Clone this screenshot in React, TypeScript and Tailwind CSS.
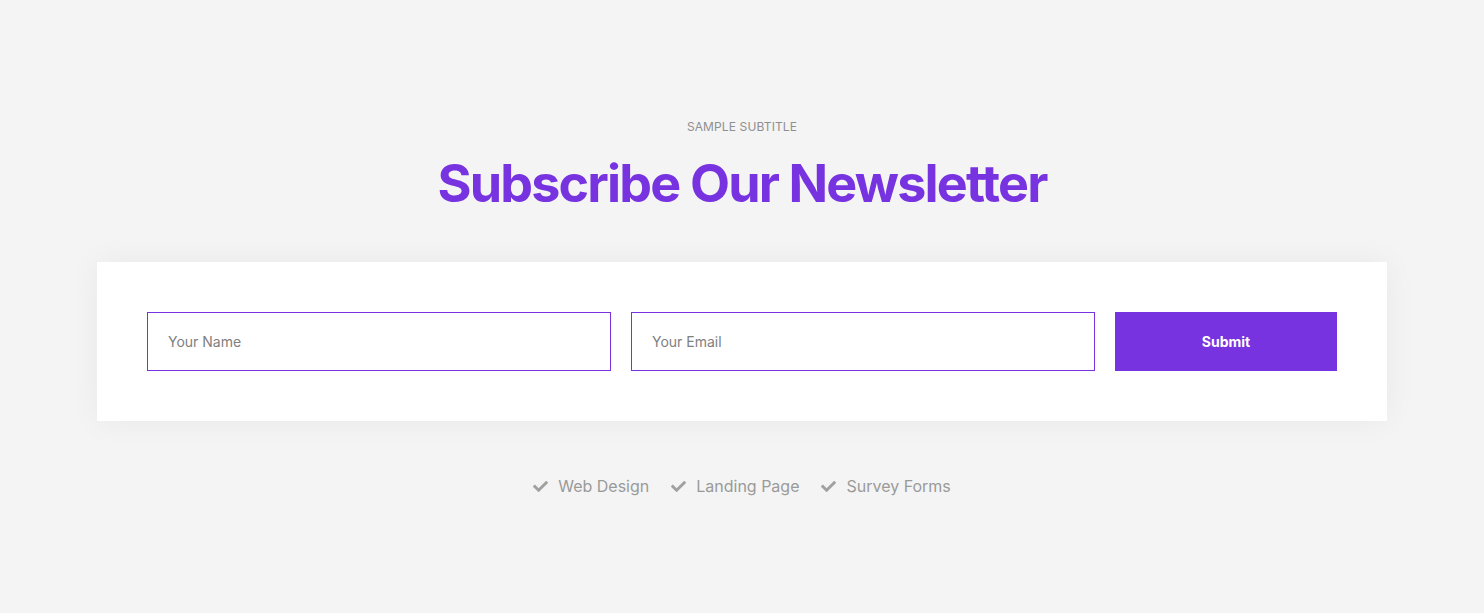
import { FaCheck } from "react-icons/fa";

const features = ["Web Design", "Landing Page", "Survey Forms"];

export default function App() {
  return (
    <div
      className="min-h-screen w-full bg-[#f4f4f4] flex flex-col items-center"
      style={{ fontFamily: "Inter, 'Noto Sans', sans-serif" }}
    >
      <p className="mt-[120px] text-[12px] leading-[14px] uppercase text-[#8f8f8f] tracking-[0.01em]">
        Sample Subtitle
      </p>
      <h1 className="mt-[20px] text-[52px] leading-[60px] font-bold tracking-[-0.035em] text-[#7733e0]">
        Subscribe Our Newsletter
      </h1>
      <div className="mt-[48px] w-[1290px] h-[159px] bg-white shadow-[0_0_30px_rgba(0,0,0,0.05)] px-[50px] flex items-center gap-[20px]">
        <input
          placeholder="Your Name"
          className="w-[464px] h-[59px] border border-[#7733e0] px-[20px] text-[14px] text-[#333] placeholder:text-[#808080] outline-none"
        />
        <input
          placeholder="Your Email"
          className="w-[464px] h-[59px] border border-[#7733e0] px-[20px] text-[14px] text-[#333] placeholder:text-[#808080] outline-none"
        />
        <button className="w-[222px] h-[59px] bg-[#7733e0] text-white text-[14px] font-bold">
          Submit
        </button>
      </div>
      <ul className="mt-[53px] flex items-center gap-[22px]">
        {features.map((f) => (
          <li key={f} className="flex items-center gap-[10px] text-[16px] text-[#9a9a9a]">
            <FaCheck className="w-[15px] h-[15px] text-[#a0a0a0]" />
            {f}
          </li>
        ))}
      </ul>
    </div>
  );
}
